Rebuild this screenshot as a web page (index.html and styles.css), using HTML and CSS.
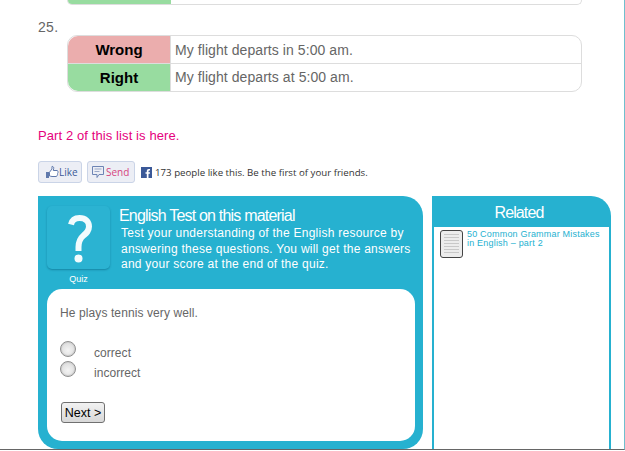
FILE: index.html
```html
<!DOCTYPE html>
<html lang="en">
<head>
    <meta charset="UTF-8">
    <meta name="viewport" content="width=device-width, initial-scale=1.0">
    <title>Common Grammar Mistakes</title>
    <link rel="stylesheet" href="styles.css">
</head>
<body>
    <div class="page">
        <div class="article">
            <!-- end of item 24, cut off by the top of the window -->
            <div class="prev-table"><div class="prev-right"></div></div>

            <p class="item-number">25.</p>
            <table class="compare">
                <tr>
                    <th class="wrong">Wrong</th>
                    <td>My flight departs in 5:00 am.</td>
                </tr>
                <tr>
                    <th class="right">Right</th>
                    <td>My flight departs at 5:00 am.</td>
                </tr>
            </table>

            <p class="next-part">Part 2 of this list is here.</p>

            <!-- Facebook buttons -->
            <div class="social">
                <span class="fb-btn fb-btn-like">
                    <svg class="fb-icon" viewBox="0 0 14 14" width="14" height="14">
                        <path d="M1 7h3v6H1z" fill="#5f78ab"/>
                        <path d="M4.500 7.200 7 4V1.400c1.300 0 1.900.9 1.700 2.100L8.300 5.500H12c.9 0 1.200 1 .7 1.500.5.500.4 1.300-.2 1.600.3.600.1 1.200-.4 1.500.2.700-.2 1.400-1 1.400H7c-1 0-1.500-.5-2.500-.5z" fill="#fff" stroke="#5f78ab"/>
                    </svg>
                    <span class="fb-like">Like</span>
                </span>
                <span class="fb-btn fb-btn-send">
                    <svg class="fb-icon" viewBox="0 0 14 14" width="14" height="14">
                        <path d="M1.500 1.500h11v8H8l-2 3v-3H1.500z" fill="#eceef5" stroke="#6d84b4"/>
                        <path d="M3.500 4h7M3.500 6.500h5" stroke="#9aa9c8"/>
                    </svg>
                    <span class="fb-send">Send</span>
                </span>
                <svg class="fb-logo" viewBox="0 0 11 11" width="11" height="11">
                    <rect width="11" height="11" fill="#3b5998"/>
                    <path d="M7.500 11V6.800h1.300l.2-1.600H7.500v-1c0-.5.200-.8.800-.8H9V2c-.2 0-.7-.1-1.200-.1-1.200 0-2 .7-2 2.100v1.200H4.500v1.600h1.300V11z" fill="#fff"/>
                </svg>
                <span class="fb-count">173 people like this. Be the first of your friends.</span>
            </div>

            <div class="panels">
                <!-- Quiz panel -->
                <div class="quiz">
                    <div class="quiz-head">
                        <div class="quiz-badge">
                            <svg class="quiz-icon" viewBox="0 0 63 63" width="63" height="63">
                                <path d="M24 18.500C25 14 28 12 32.500 12 38.500 12 42 15.500 42 20.500 42 25 39.500 27 36.500 29.500 33 32.500 31.500 35 31.500 41V45" fill="none" stroke="#f2fbfd" stroke-width="6"/>
                                <circle cx="31.500" cy="52.500" r="4" fill="#f2fbfd"/>
                            </svg>
                            <div class="quiz-label">Quiz</div>
                        </div>
                        <div class="quiz-intro">
                            <h2>English Test on this material</h2>
                            <p>Test your understanding of the English resource by answering these questions. You will get the answers and your score at the end of the quiz.</p>
                        </div>
                    </div>
                    <div class="quiz-body">
                        <p class="question">He plays tennis very well.</p>
                        <label class="option"><span class="radio"></span>correct</label>
                        <label class="option"><span class="radio"></span>incorrect</label>
                        <button class="next-btn">Next &gt;</button>
                    </div>
                </div>

                <!-- Related panel -->
                <div class="related">
                    <h2>Related</h2>
                    <div class="related-body">
                        <div class="doc-thumb"><span></span></div>
                        <a class="related-link" href="#">50 Common Grammar Mistakes in English – part 2</a>
                    </div>
                </div>
            </div>
        </div>
    </div>
</body>
</html>
```

FILE: styles.css
```css
/* General Styles */
html, body {
    margin: 0;
    padding: 0;
    height: 451px;
    overflow: hidden;
    background: #fff;
}

body {
    font-family: "Liberation Sans", Arial, sans-serif;
    color: #666;
}

.page {
    width: 625px;
    height: 450px;
    box-sizing: border-box;
    border-right: 1px solid #6fbfce;
    border-bottom: 1px solid #666;
    overflow: hidden;
}

.article {
    padding-left: 38px;
}

/* Comparison tables */
.prev-table {
    width: 515px;
    height: 5px;
    margin-left: 29px;
    box-sizing: border-box;
    border: 1px solid #ddd;
    border-top: none;
    border-radius: 0 0 10px 10px;
    overflow: hidden;
}

.prev-right {
    width: 103px;
    height: 4px;
    background: #98dca0;
}

.item-number {
    margin: 15px 0 0;
    height: 15px;
    font-size: 14px;
    letter-spacing: 0.3px;
    line-height: 15px;
    color: #666;
}

.compare {
    width: 515px;
    margin-left: 29px;
    border-collapse: separate;
    border-spacing: 0;
    border: 1px solid #ddd;
    border-radius: 10px;
    font-size: 14px;
}

.compare th,
.compare td {
    height: 27px;
    padding: 0 0 1px;
    box-sizing: border-box;
}

.compare th {
    width: 103px;
    color: #000;
    font-size: 15px;
    text-align: center;
    border-right: 1px solid #ddd;
}

.compare td {
    padding-left: 4px;
    color: #666;
    letter-spacing: 0.07px;
}

.compare tr:first-child th,
.compare tr:first-child td {
    height: 28px;
    padding-bottom: 0;
    border-bottom: 1px solid #ddd;
}

.wrong {
    background: #ebadad;
    border-top-left-radius: 10px;
}

.right {
    background: #98dca0;
    border-bottom-left-radius: 10px;
}

.next-part {
    margin: 36px 0 0;
    font-size: 13px;
    letter-spacing: 0.1px;
    line-height: 16px;
    color: #e5007d;
}

/* Facebook buttons */
.social {
    display: flex;
    align-items: center;
    height: 22px;
    margin-top: 17px;
}

.fb-btn {
    display: flex;
    align-items: center;
    box-sizing: border-box;
    height: 22px;
    padding-left: 6px;
    margin-right: 5px;
    background: #eceef5;
    border: 1px solid #cad4e7;
    border-radius: 3px;
    font-family: "Open Sans", sans-serif;
    font-size: 10px;
}

.fb-btn-like {
    width: 44px;
}

.fb-btn-send {
    width: 48px;
    padding-left: 3px;
}

.fb-like {
    color: #3b5998;
}

.fb-send {
    margin-left: 1px;
    color: #d6447e;
}

.fb-logo {
    margin-left: 1px;
    margin-right: 3px;
}

.fb-count {
    font-family: "Open Sans", sans-serif;
    font-size: 9.700px;
    color: #333;
}

/* Quiz and related panels */
.panels {
    display: flex;
    gap: 9px;
    margin-top: 13px;
}

.quiz {
    width: 385px;
    height: 253px;
    box-sizing: border-box;
    padding: 9px 8px 8px 9px;
    background: #26b1d0;
    border-radius: 0 20px 20px 20px;
}

.quiz-head {
    display: flex;
    height: 84px;
}

.quiz-badge {
    width: 65px;
    margin-right: 7px;
    text-align: center;
}

.quiz-icon {
    display: block;
    margin-top: 1px;
    background: #2bb3d2;
    border-radius: 5px;
    box-shadow: 0 1px 2px rgba(0, 80, 110, 0.45);
}

.quiz-label {
    width: 63px;
    margin-top: 5px;
    color: #fff;
    font-size: 9px;
}

.quiz-intro h2 {
    margin: 2px 0 0;
    color: #fff;
    font-size: 16px;
    font-weight: normal;
    letter-spacing: -0.8px;
    line-height: 17px;
}

.quiz-intro p {
    margin: 2px 0 0 2px;
    color: #fff;
    font-size: 12px;
    line-height: 15.500px;
    letter-spacing: 0.25px;
    width: 292px;
}

.quiz-body {
    box-sizing: border-box;
    width: 368px;
    height: 152px;
    padding: 17px 13px;
    background: #fff;
    border-radius: 15px;
}

.question {
    margin: 0 0 21px;
    font-size: 12px;
    letter-spacing: 0.1px;
    line-height: 14px;
}

.option {
    display: flex;
    height: 20px;
    color: #666;
    font-size: 12px;
    letter-spacing: 0.05px;
    line-height: 24px;
}

.radio {
    box-sizing: border-box;
    width: 16px;
    height: 16px;
    margin-right: 18px;
    border: 1px solid #8f8f8f;
    border-radius: 50%;
    background: radial-gradient(circle at 50% 60%, #f4f4f4, #d4d4d4);
    box-shadow: inset 0 0 0 1px #d0d0d0;
}

.next-btn {
    display: block;
    box-sizing: border-box;
    width: 44px;
    height: 21px;
    margin-top: 21px;
    margin-left: 1px;
    padding: 1px 0 0;
    background: linear-gradient(#f2f2f2, #d8d8d8);
    border: 1px solid #707070;
    border-radius: 3px;
    color: #000;
    font-family: "Liberation Sans", Arial, sans-serif;
    font-size: 12.500px;
}

.related {
    width: 179px;
    height: 253px;
    background: #26b1d0;
    border-radius: 0 20px 0 0;
}

.related h2 {
    margin: 0;
    height: 31px;
    padding-right: 5px;
    color: #fff;
    font-size: 16px;
    font-weight: normal;
    letter-spacing: -0.9px;
    line-height: 33px;
    text-align: center;
}

.related-body {
    display: flex;
    box-sizing: border-box;
    height: 222px;
    margin: 0 2px;
    padding: 3px 5px 3px 6px;
    background: #fff;
    gap: 4px;
}

.doc-thumb {
    flex: none;
    box-sizing: border-box;
    width: 23px;
    height: 28px;
    padding: 3px;
    background: #ececec;
    border: 1px solid #444;
    border-radius: 3px;
}

.doc-thumb span {
    display: block;
    height: 100%;
    background: repeating-linear-gradient(#c8c8c8 0 1px, #ececec 1px 3px);
}

.related-link {
    color: #26b1d0;
    font-size: 9px;
    line-height: 9px;
    letter-spacing: 0.2px;
    text-decoration: none;
}
```
